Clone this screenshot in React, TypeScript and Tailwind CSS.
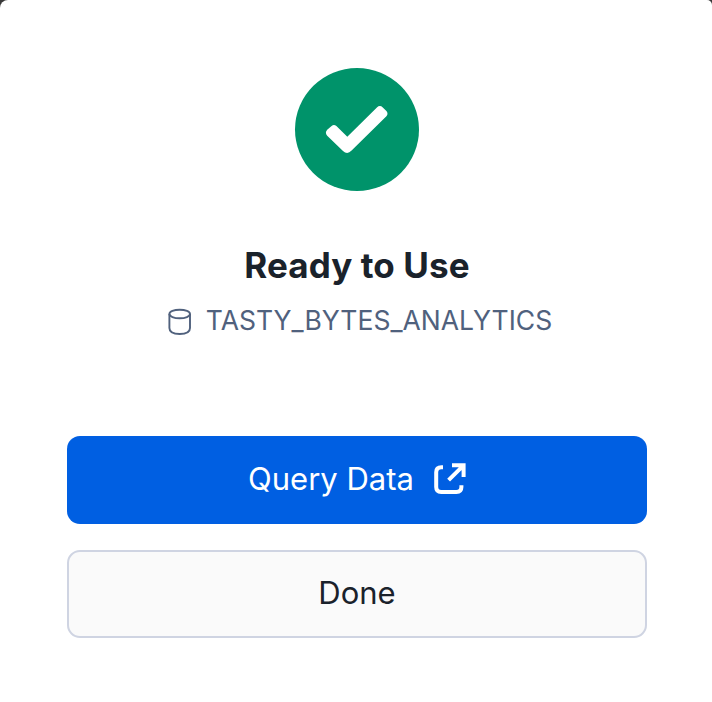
function CheckBadge() {
  return (
    <div className="flex h-[123px] w-[124px] items-center justify-center rounded-[50%] bg-[#00936a]">
      <svg width="124" height="123" viewBox="0 0 124 123" fill="#fff" aria-hidden="true">
        <path d="M32.2 61.8 L36.6 57.9 Q39 56 41.4 58.1 L52.3 68.7 L81.9 39.4 Q84.9 36.8 87.8 39.4 L91.4 43.1 Q93.6 45.8 91.4 48.3 L56.6 82.6 Q52.3 87.2 48 83 L32.2 67.8 Q29.6 64.8 32.2 61.8 Z" />
      </svg>
    </div>
  );
}

function DatabaseIcon() {
  return (
    <svg className="mt-0.5" width="24" height="28" viewBox="0 0 24 28" fill="none" stroke="#50617d" strokeWidth="1.9" aria-hidden="true">
      <ellipse cx="11.7" cy="6" rx="10.3" ry="4.3" />
      <path d="M1.4 6v14c0 4 4 6 10.3 6S22 24 22 20V6" />
    </svg>
  );
}

function OpenIcon() {
  return (
    <svg width="32" height="32" viewBox="0 0 32 32" fill="none" stroke="#fff" strokeWidth="4" aria-hidden="true">
      <path d="M9 4.3H7.4C4 4.3 2.2 6 2.2 9.2V24c0 3.2 1.8 4.9 5 4.9h15.2c3.2 0 5-1.7 5-4.9v-1.7" />
      <path d="M18 2.3h11.6V14M28.5 3.3 14.6 17.2" />
    </svg>
  );
}

export default function App() {
  return (
    <main className="h-[702px] w-[712px] bg-[#393939] font-['Inter',sans-serif]">
      <section className="flex h-full flex-col items-center rounded-tl-[8px] rounded-tr-[5px] bg-white pt-[68px] pr-[65px] pl-[67px]">
        <CheckBadge />
        <h1 className="mt-[52px] text-[35px] leading-[44px] font-bold tracking-[0.1px] text-[#1a222b]">Ready to Use</h1>
        <div className="mt-[16px] flex h-[36px] items-center gap-[14px] pl-[6px] text-[#50617d]">
          <DatabaseIcon />
          <span className="pb-[2px] text-[26.5px] leading-[36px]">TASTY_BYTES_ANALYTICS</span>
        </div>
        <button className="mt-[97px] flex h-[88px] w-full shrink-0 items-center justify-center gap-[20px] rounded-[13px] bg-[#005fe2] pb-[2px] text-[31px] text-white">
          <span>Query Data</span>
          <OpenIcon />
        </button>
        <button className="mt-[26px] h-[88px] w-full shrink-0 rounded-[13px] border-2 border-[#cfd4e2] bg-[#fafafa] pb-[2px] text-[31px] text-[#1a222b]">
          Done
        </button>
      </section>
    </main>
  );
}
